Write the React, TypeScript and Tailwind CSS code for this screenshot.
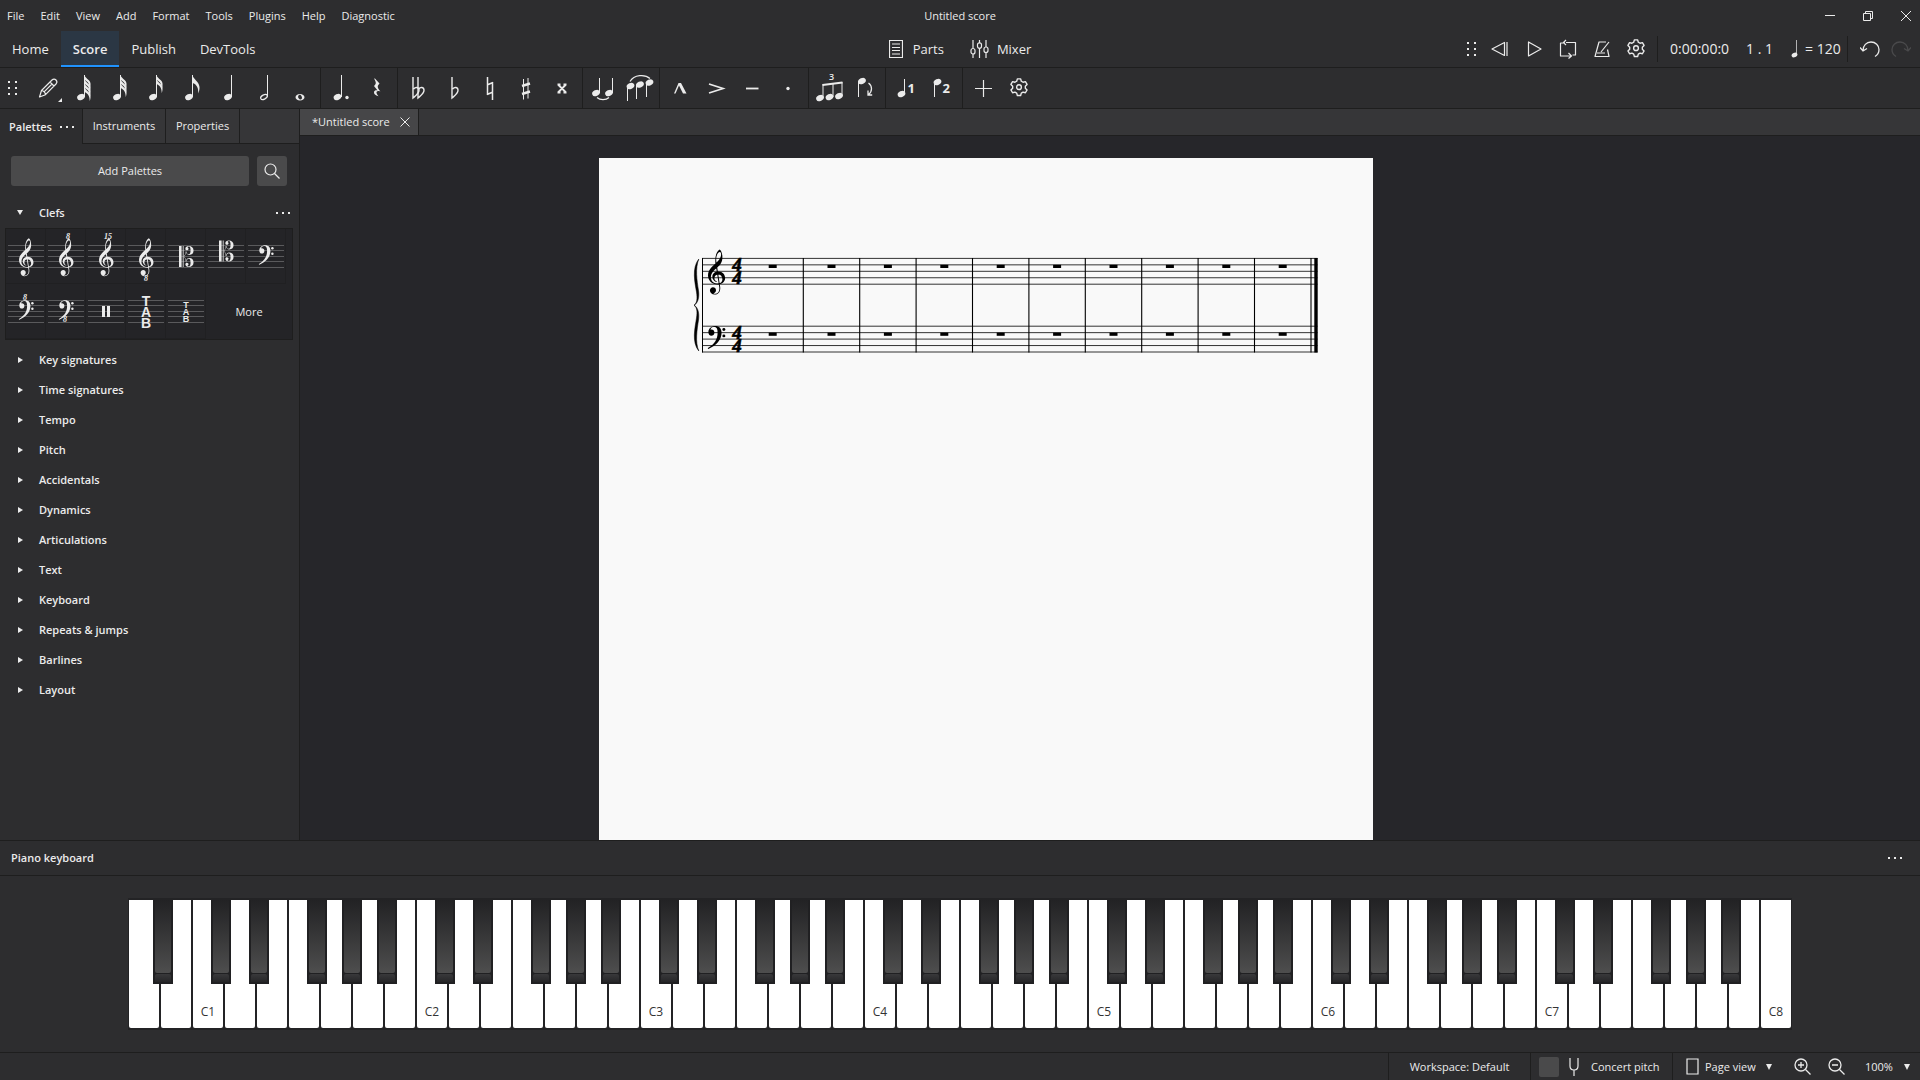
import { useState } from 'react';
import type { ReactNode } from 'react';

const menus = ['File', 'Edit', 'View', 'Add', 'Format', 'Tools', 'Plugins', 'Help', 'Diagnostic'];
const pages = ['Home', 'Score', 'Publish', 'DevTools'];
const palettes = [
  'Key signatures', 'Time signatures', 'Tempo', 'Pitch', 'Accidentals', 'Dynamics',
  'Articulations', 'Text', 'Keyboard', 'Repeats & jumps', 'Barlines', 'Layout',
];

// Clef outlines, 100 units to a staff space, origin on the clef's own line
const G_CLEF =
  'M150-98C225-105 268-50 268 5C268 65 215 105 150 105C65 105 0 45 0-35C0-130 80-190 145-250C190-290 205-330 205-365C205-390 195-400 185-400C160-400 128-350 128-290C128-270 130-255 132-240L190 140C200 210 165 263 105 263C60 263 30 235 30 200C30 170 52 150 78 150C105 150 125 170 125 197C125 225 105 240 85 242C92 250 100 252 108 252C155 252 185 210 176 145L118-210C105-300 120-400 180-439C205-430 225-375 225-320C225-240 190-200 150-165C90-115 45-75 45-5C45 55 95 92 155 92C200 92 225 65 225 25C225-20 195-52 155-50C118-48 100-20 100 8C100 35 118 52 138 60C140 66 136 68 130 66C95 55 68 25 68-15C68-60 100-95 150-98Z';
const F_CLEF =
  'M6-10C6-65 55-105 115-105C175-105 212-65 212 0C212 110 130 200 5 254C-5 250-5 242 5 236C105 175 150 100 150 0C150-60 135-92 95-92C65-92 45-72 38-48C75-55 100-35 100 0C100 30 78 48 52 48C25 48 6 25 6-10Z';

const GClef = ({ x, y, space }: { x: number; y: number; space: number }) => (
  <path d={G_CLEF} fill="currentColor" transform={`translate(${x} ${y}) scale(${space / 100})`} />
);

const FClef = ({ x, y, space }: { x: number; y: number; space: number }) => (
  <g fill="currentColor" transform={`translate(${x} ${y}) scale(${space / 100})`}>
    <path d={F_CLEF} />
    <circle cx="248" cy="-50" r="23" />
    <circle cx="248" cy="50" r="23" />
  </g>
);

const CClef = ({ x, y, space }: { x: number; y: number; space: number }) => {
  const half = (
    <path d="M95 0C125-25 132-48 134-85C142-50 165-30 195-30C255-30 280-65 280-115C280-170 240-202 190-202C150-202 122-180 122-150C122-130 136-118 152-118C172-118 184-132 184-148C184-160 176-170 164-175C172-188 182-190 190-190C215-190 222-160 222-115C222-70 212-42 188-42C165-42 150-60 142-98L128-98C126-60 118-30 95-12Z" />
  );
  return (
    <g fill="currentColor" transform={`translate(${x} ${y}) scale(${space / 100})`}>
      <path d="M0-200h50v400h-50zM72-200h16v400h-16z" />
      {half}
      <g transform="scale(1 -1)">{half}</g>
    </g>
  );
};

const Head = ({ x, y }: { x: number; y: number }) => (
  <ellipse cx={x} cy={y} rx="4" ry="2.9" fill="currentColor" transform={`rotate(-25 ${x} ${y})`} />
);

const Stem = ({ x, from, to }: { x: number; from: number; to: number }) => (
  <path d={`M${x} ${from}V${to}`} stroke="currentColor" strokeWidth="1" fill="none" />
);

const Flags = ({ count }: { count: number }) => (
  <>
    {Array.from({ length: count }, (_, i) => (
      <path
        key={i}
        d={`M18.5 ${7 + i * 4}c.6 3 4.5 4.4 5.6 7c.8 2 .6 4.5-.4 7c.2-5-2.2-8-5.2-9z`}
        fill="currentColor"
      />
    ))}
  </>
);

const Flat = ({ x }: { x: number }) => (
  <path
    d={`M${x} 9V30C${x + 3} 27.5 ${x + 6} 25.5 ${x + 6} 22.3C${x + 6} 19 ${x + 2.6} 18.6 ${x + 0.6} 21`}
    fill="none"
    stroke="currentColor"
    strokeWidth="1.4"
  />
);

const cogPath =
  'M10.2 2h3.6l.7 2.6 1.9 1.1 2.6-.7 1.8 3.1-1.9 1.9v2.2l1.9 1.9-1.8 3.1-2.6-.7-1.9 1.1-.7 2.6h-3.6l-.7-2.6-1.9-1.1-2.6.7-1.8-3.1 1.9-1.9V10L3.200 8.100 5 5l2.600.700 1.900-1.100z';

const Cog = ({ className }: { className: string }) => (
  <svg viewBox="0 0 24 24" className={className} fill="none" stroke="currentColor" strokeWidth="1.5" strokeLinejoin="round">
    <path d={cogPath} />
    <circle cx="12" cy="11.1" r="2.6" />
  </svg>
);

const Grip = () => (
  <svg width="10" height="16" fill="currentColor">
    {[1, 7, 13].map((y) => (
      <path key={y} d={`M0 ${y}h2v2h-2zM7 ${y}h2v2h-2z`} />
    ))}
  </svg>
);

const Dots = () => (
  <svg width="16" height="4" fill="currentColor">
    <path d="M0 1h2v2h-2zM6 1h2v2h-2zM12 1h2v2h-2z" />
  </svg>
);

const noteTools: { label: string; icon: ReactNode }[][] = [
  [
    {
      label: 'Note input',
      icon: (
        <>
          <path
            d="M9.500 29l2-6.500L22 12c1.300-1.300 2.800-1.300 4 0s1.200 2.700 0 4L15.500 26.700zM20 14l4 4M11.500 22.500c2 .3 3.700 2 4 4.200M13.800 24.200l8.200-8.200"
            fill="none"
            stroke="currentColor"
            strokeWidth="1.2"
            strokeLinejoin="round"
          />
          <path d="M32 30v4h-4z" fill="currentColor" />
        </>
      ),
    },
    { label: '64th note', icon: <><Head x={15} y={29} /><Stem x={18.5} from={7} to={29} /><Flags count={4} /></> },
    { label: '32nd note', icon: <><Head x={15} y={29} /><Stem x={18.5} from={7} to={29} /><Flags count={3} /></> },
    { label: '16th note', icon: <><Head x={15} y={29} /><Stem x={18.5} from={7} to={29} /><Flags count={2} /></> },
    {
      label: 'Eighth note',
      icon: (
        <>
          <Head x={15} y={29} />
          <Stem x={18.5} from={7} to={29} />
          <path d="M18.500 7c.5 4 6.500 6.500 7 12c.2 2.500-.5 4.500-1.500 6.500c1-5-1.500-9.500-5.500-10.500z" fill="currentColor" />
        </>
      ),
    },
    { label: 'Quarter note', icon: <><Head x={18} y={29} /><Stem x={21.5} from={7} to={29} /></> },
    {
      label: 'Half note',
      icon: (
        <>
          <ellipse cx="18" cy="29" rx="3.600" ry="2.100" fill="none" stroke="currentColor" strokeWidth="1.200" transform="rotate(-28 18 29)" />
          <Stem x={21.5} from={7} to={28} />
        </>
      ),
    },
    {
      label: 'Whole note',
      icon: (
        <path
          fillRule="evenodd"
          fill="currentColor"
          d="M18 26c2.500 0 4.500 1.300 4.500 3.200S20.500 32.500 18 32.500s-4.500-1.400-4.500-3.300S15.500 26 18 26zm-.8.900c-1.400.4-1.300 2.200-.6 3.400.7 1 1.600 1.400 2.400 1.100 1.300-.5 1.200-2.200.4-3.400-.5-.8-1.400-1.300-2.200-1.100z"
        />
      ),
    },
  ],
  [
    {
      label: 'Augmentation dot',
      icon: <><Head x={14.5} y={29} /><Stem x={18.5} from={7} to={29} /><circle cx="24" cy="29.500" r="1.700" fill="currentColor" /></>,
    },
    {
      label: 'Rest',
      icon: (
        <path
          fill="currentColor"
          d="M15.500 10l5 5.500c-2.500 2.500-2.300 4 .5 7.500l.3.500c-3-1.200-4.200 0-3.700 1.800.3 1.200 1 2 1.900 3-3-1-5-2.500-4.500-4.500.4-1.500 2-2 3.600-1.400l-3.600-4.400c2.300-2 2.300-3.500.5-6.500z"
        />
      ),
    },
  ],
  [
    { label: 'Double flat', icon: <><Flat x={13} /><Flat x={18} /></> },
    { label: 'Flat', icon: <Flat x={16} /> },
    {
      label: 'Natural',
      icon: <path d="M15.500 9V27M20.500 14V32M15 17l6-2.500M15 26.500l6-2.500" fill="none" stroke="currentColor" strokeWidth="1.500" />,
    },
    {
      label: 'Sharp',
      icon: (
        <>
          <path d="M15.500 11V31.500M20 10V30.500" stroke="currentColor" strokeWidth="1" />
          <path d="M14 18l8-2.500M14 26l8-2.500" stroke="currentColor" strokeWidth="2.500" />
        </>
      ),
    },
    {
      label: 'Double sharp',
      icon: <path d="M14 16.500l8 8M22 16.500l-8 8M13.500 16.500h3M13.500 24.500h3M19.500 16.500h3M19.500 24.500h3" stroke="currentColor" strokeWidth="1.800" />,
    },
  ],
  [
    {
      label: 'Tie',
      icon: (
        <>
          <Head x={11} y={25} /><Stem x={14.5} from={10} to={25} />
          <Head x={24} y={25} /><Stem x={27.5} from={10} to={25} />
          <path d="M12 29.500c3 2.800 9 2.800 12 0" fill="none" stroke="currentColor" strokeWidth="1.200" />
        </>
      ),
    },
    {
      label: 'Slur',
      icon: (
        <>
          <Head x={9.5} y={18} /><Stem x={6.5} from={18} to={33} />
          <Head x={19} y={16.5} /><Stem x={15.5} from={16.5} to={31} />
          <Head x={28.5} y={14.5} /><Stem x={25.5} from={14.5} to={29} />
          <path d="M9 13.500c4-7 15-7.500 20-3" fill="none" stroke="currentColor" strokeWidth="1.200" />
        </>
      ),
    },
  ],
  [
    { label: 'Marcato', icon: <path d="M12 25.500l4.500-10.500h2.500l5.500 10.500h-3.500l-4-8-3.500 8z" fill="currentColor" /> },
    { label: 'Accent', icon: <path d="M11 16l14 4.500-14 4.500" fill="none" stroke="currentColor" strokeWidth="1.700" /> },
    { label: 'Tenuto', icon: <path d="M12 20.500h12.500" stroke="currentColor" strokeWidth="1.800" /> },
    { label: 'Staccato', icon: <circle cx="18" cy="20.500" r="1.700" fill="currentColor" /> },
  ],
  [
    {
      label: 'Tuplet',
      icon: (
        <>
          <Head x={9} y={30} /><Stem x={12} from={16} to={30} />
          <Head x={18.5} y={29} /><Stem x={22} from={15} to={29} />
          <Head x={28} y={28} /><Stem x={31} from={14} to={28} />
          <path d="M11.500 17l20-2.500" stroke="currentColor" strokeWidth="2.200" />
          <text x="20.500" y="12" textAnchor="middle" fill="currentColor" className="text-[9px] font-semibold">3</text>
        </>
      ),
    },
    {
      label: 'Flip direction',
      icon: (
        <>
          <Head x={15} y={13} /><Stem x={11.5} from={13} to={29} />
          <path d="M21.500 15c4 3 4 8.500 0 11.500M21 22.500v4.500h4.200" fill="none" stroke="currentColor" strokeWidth="1.300" />
        </>
      ),
    },
  ],
  [
    {
      label: 'Voice 1',
      icon: (
        <>
          <Head x={13.5} y={26} /><Stem x={16.5} from={11} to={26} />
          <text x="19.500" y="25" fill="currentColor" className="text-[13px] font-bold">1</text>
        </>
      ),
    },
    {
      label: 'Voice 2',
      icon: (
        <>
          <Head x={13.5} y={14} /><Stem x={10.5} from={14} to={29} />
          <text x="18.500" y="25" fill="currentColor" className="text-[13px] font-bold">2</text>
        </>
      ),
    },
  ],
];

const NoteToolbar = () => (
  <div className="flex h-10 items-center" role="toolbar" aria-label="Note input">
    <div className="flex w-7 pl-2"><Grip /></div>
    {noteTools.map((group, i) => (
      <div key={i} className="flex h-full items-center border-r border-[#1e1e1e] pr-0.5 not-first:pl-0.5">
        {group.map((tool) => (
          <button key={tool.label} aria-label={tool.label} className="h-10 w-9">
            <svg viewBox="0 0 36 40" className="h-10 w-9">{tool.icon}</svg>
          </button>
        ))}
      </div>
    ))}
    <button aria-label="Add" className="flex h-10 w-10 items-center justify-center">
      <svg width="17" height="17"><path d="M8.500 0v17M0 8.500h17" stroke="currentColor" strokeWidth="1.200" /></svg>
    </button>
    <button aria-label="Customise toolbar" className="flex h-10 w-8 items-center justify-center">
      <Cog className="h-[22px] w-[22px]" />
    </button>
  </div>
);

const TitleBar = () => (
  <header className="grid h-[31px] grid-cols-[1fr_auto_1fr] items-center">
    <nav className="flex gap-4 pl-[7px]">
      {menus.map((menu) => (
        <button key={menu}>{menu}</button>
      ))}
    </nav>
    <h1>Untitled score</h1>
    <div className="flex justify-end gap-[26px] pr-2">
      <button aria-label="Minimise"><svg width="12" height="12"><path d="M1 5.500h10" stroke="currentColor" /></svg></button>
      <button aria-label="Restore">
        <svg width="12" height="12" fill="none" stroke="currentColor">
          <path d="M1.500 3.500h7v7h-7zM3.500 3.500v-2h7v7h-2" />
        </svg>
      </button>
      <button aria-label="Close"><svg width="12" height="12"><path d="M1 1l10 10M11 1L1 11" stroke="currentColor" /></svg></button>
    </div>
  </header>
);

const transport = [
  { label: 'Rewind', d: 'M17 3v14M14.500 3.500v13L2 10z' },
  { label: 'Play', d: 'M4.500 3v14L17 10z' },
  { label: 'Loop playback', d: 'M7 4h-4.500v13h10M8 3.500h9.500v12.500h-3M8 1L5.500 3.500l2.500 2.500M10.500 14l3 3-3 2.500' },
  { label: 'Metronome', d: 'M14 3H7L3 17.500h14l-1.500-7M9 13L17 3M5 14h8' },
];

const MainBar = ({ page, onPage }: { page: string; onPage: (p: string) => void }) => (
  <div className="grid h-9 grid-cols-[1fr_auto_1fr] items-center text-[13px]">
    <nav className="flex h-full">
      {pages.map((name) => (
        <button
          key={name}
          onClick={() => onPage(name)}
          className={`border-b-2 px-3 pt-0.5 ${page === name ? 'border-[#2093fe] bg-[#2b3744] font-semibold' : 'border-transparent'}`}
        >
          {name}
        </button>
      ))}
    </nav>
    <div className="flex items-center gap-[26px]">
      <button className="flex items-center gap-2.5">
        <svg width="14" height="18" fill="none" stroke="currentColor">
          <path d="M.5.500h13v17h-13zM3 4h8M3 7.500h8M3 10.500h8M3 14h8" strokeWidth="1.200" />
        </svg>
        Parts
      </button>
      <button className="flex items-center gap-2">
        <svg width="19" height="18" fill="none" stroke="currentColor" strokeWidth="1.200">
          <path d="M3 0v8M3 14v4M9.500 0v3M9.500 8v10M16 0v7M16 12v6" />
          <rect x="1" y="8.500" width="4" height="5.500" rx="2" />
          <rect x="7.500" y="2.800" width="4" height="5.500" rx="2" />
          <rect x="14" y="7" width="4" height="5.500" rx="2" />
        </svg>
        Mixer
      </button>
    </div>
    <div className="flex h-full items-center justify-end pr-1 text-[14px]">
      <div className="mr-1.5"><Grip /></div>
      {transport.map((t) => (
        <button key={t.label} aria-label={t.label} className="flex w-[34px] justify-center">
          <svg width="20" height="20" fill="none" stroke="currentColor" strokeWidth="1.200" strokeLinejoin="round">
            <path d={t.d} />
          </svg>
        </button>
      ))}
      <button aria-label="Playback settings" className="flex w-[34px] justify-center">
        <Cog className="h-[22px] w-[22px]" />
      </button>
      <div className="mr-3 ml-1 h-[26px] w-px bg-[#1e1e1e]" />
      <span className="w-[76px]">0:00:00:0</span>
      <span className="w-[45px]">1 . 1</span>
      <button className="flex w-[56px] items-center gap-1.5">
        <svg width="8" height="18" className="shrink-0">
          <ellipse cx="3.500" cy="15" rx="3" ry="2.200" fill="currentColor" transform="rotate(-25 3.500 15)" />
          <path d="M5.500 0v15" stroke="currentColor" strokeOpacity=".7" />
        </svg>
        <span className="whitespace-nowrap">= 120</span>
      </button>
      <div className="mr-1.5 h-[26px] w-px bg-[#1e1e1e]" />
      <button aria-label="Undo" className="flex w-[31px] justify-center">
        <svg width="20" height="18" fill="none" stroke="currentColor" strokeWidth="1.300">
          <path d="M3 10.500C3 5.500 6.500 2 11 2s8 3.500 8 7.500c0 3-1.500 5.500-4 7M0 7.500l3 3.500 4-2.500" />
        </svg>
      </button>
      <button aria-label="Redo" disabled className="flex w-[31px] justify-center opacity-15">
        <svg width="20" height="18" fill="none" stroke="currentColor" strokeWidth="1.300">
          <path d="M17 10.500C17 5.500 13.500 2 9 2S1 5.500 1 9.500c0 3 1.500 5.500 4 7M20 7.500l-3 3.500-4-2.500" />
        </svg>
      </button>
    </div>
  </div>
);

const Ottava = ({ x = 22, y, children }: { x?: number; y: number; children: ReactNode }) => (
  <text x={x} y={y} textAnchor="middle" fill="currentColor" className="font-['Liberation_Serif'] text-[8px] font-bold italic">
    {children}
  </text>
);

const Tab = ({ size, top, step }: { size: string; top: number; step: number }) => (
  <text fill="currentColor" textAnchor="middle" className={`font-['Liberation_Sans'] font-bold ${size}`}>
    {['T', 'A', 'B'].map((letter, i) => (
      <tspan key={letter} x="20" y={top + i * step}>{letter}</tspan>
    ))}
  </text>
);

// Each cell is 40 x 55 with the five lines starting at y = 16
const clefs: { label: string; icon: ReactNode }[] = [
  { label: 'Treble clef', icon: <GClef x={13} y={33} space={5.4} /> },
  { label: 'Treble clef 8va alta', icon: <><GClef x={13} y={33} space={5.4} /><Ottava y={10}>8</Ottava></> },
  { label: 'Treble clef 15ma alta', icon: <><GClef x={13} y={33} space={5.4} /><Ottava y={10}>15</Ottava></> },
  { label: 'Treble clef 8va bassa', icon: <><GClef x={13} y={33} space={5.4} /><Ottava x={20} y={52}>8</Ottava></> },
  { label: 'Alto clef', icon: <CClef x={13} y={27.5} space={5.2} /> },
  { label: 'Tenor clef', icon: <CClef x={13} y={22} space={5.2} /> },
  { label: 'Bass clef', icon: <FClef x={13} y={22} space={5.4} /> },
  { label: 'Bass clef 8va alta', icon: <><FClef x={13} y={22} space={5.4} /><Ottava x={19} y={16}>8</Ottava></> },
  { label: 'Bass clef 8va bassa', icon: <><FClef x={13} y={22} space={5.4} /><Ottava x={19} y={38}>8</Ottava></> },
  { label: 'Percussion', icon: <path d="M16 22h3v11h-3zM21 22h3v11h-3z" fill="currentColor" /> },
  { label: 'Tablature', icon: <Tab size="text-[14px]" top={22} step={11} /> },
  { label: 'Tablature 4 lines', icon: <Tab size="text-[9px]" top={24} step={7} /> },
];

const Sidebar = () => (
  <aside className="flex w-[300px] shrink-0 flex-col border-r border-[#1e1e1e]">
    <div className="flex h-[35px]" role="tablist">
      <button role="tab" aria-selected="true" className="flex w-[82px] items-center gap-2 pl-[9px] font-semibold">
        Palettes <Dots />
      </button>
      <button role="tab" className="w-[84px] border-x border-b border-[#1e1e1e] bg-[#363638]">Instruments</button>
      <button role="tab" className="w-[74px] border-r border-b border-[#1e1e1e] bg-[#363638]">Properties</button>
      <div className="flex-1 border-b border-[#1e1e1e] bg-[#363638]" />
    </div>
    <div className="flex gap-2 pt-3 pr-3 pl-[11px]">
      <button className="h-[30px] flex-1 rounded-[3px] bg-[#4a4a4b]">Add Palettes</button>
      <button aria-label="Search" className="flex h-[30px] w-[30px] items-center justify-center rounded-[3px] bg-[#4a4a4b]">
        <svg width="16" height="16" fill="none" stroke="currentColor" strokeWidth="1.200">
          <circle cx="6.500" cy="6.500" r="5.500" />
          <path d="M10.500 10.500l5 5" />
        </svg>
      </button>
    </div>
    <div className="mt-3 flex h-[30px] items-center pr-[7px]">
      <button className="flex flex-1 items-center pl-[17px] font-semibold">
        <svg width="22" height="6" fill="currentColor"><path d="M0 0h6L3 5z" /></svg>
        Clefs
      </button>
      <button aria-label="Clefs options"><Dots /></button>
    </div>
    <div className="mr-1.5 ml-[5px] flex flex-wrap border border-[#1e1e1e] bg-[#242427]">
      {clefs.map((clef) => (
        <button key={clef.label} aria-label={clef.label} className="h-[55px] w-10 border-r border-b border-[#202022]">
          <svg viewBox="0 0 40 55" className="h-[55px] w-10">
            <g className="text-[#5a5a5c]" stroke="currentColor">
              {[16.5, 21.5, 27.5, 32.5, 38.5].map((y) => (
                <path key={y} d={`M2 ${y}h36`} />
              ))}
            </g>
            {clef.icon}
          </svg>
        </button>
      ))}
      <button className="h-[55px] flex-1">More</button>
    </div>
    <div className="mt-[5px]">
      {palettes.map((name) => (
        <button key={name} className="flex h-[30px] w-full items-center pl-[17px] font-semibold">
          <svg width="22" height="6" fill="currentColor"><path d="M1 0v6l5-3z" /></svg>
          {name}
        </button>
      ))}
    </div>
  </aside>
);

const BARS = [204.3, 260.7, 317.1, 373.5, 429.9, 486.3, 542.7, 599.1, 655.5];
const RESTS = [173.7, ...BARS.map((x) => x + 28.2)];

const Staff = ({ top }: { top: number }) => (
  <g transform={`translate(0 ${top})`}>
    {[0, 6.45, 12.9, 19.35, 25.8].map((y) => (
      <path key={y} d={`M103 ${y}H718.500`} stroke="#000" strokeWidth=".8" />
    ))}
    {RESTS.map((x) => (
      <rect key={x} x={x - 4} y="6.400" width="8" height="3.200" />
    ))}
    <text textAnchor="middle" className="font-['Liberation_Serif'] text-[19px] font-bold italic" stroke="#000" strokeWidth=".6">
      <tspan x="138" y="12.700">4</tspan>
      <tspan x="138" y="25.700">4</tspan>
    </text>
  </g>
);

const ScorePage = () => (
  <svg viewBox="0 0 774 1095" className="w-[774px] shrink-0 bg-[#f9f9f9] text-black">
    <Staff top={100.4} />
    <Staff top={168.2} />
    <GClef x={109} y={119.700} space={6.4} />
    <FClef x={109} y={174.700} space={6.4} />
    <path d="M99.800 101C92.500 110 96 125 97.500 134C98.500 141 98 145 95 147.200C98 149.500 98.500 153.500 97.500 160C96 170 92.500 184 99.800 193C96 184 98 172 99.500 162C100.500 155 99 150 95.500 147.200C99 144.500 100.500 139.500 99.500 132.500C98 122.500 96 110.500 99.800 101Z" stroke="#000" strokeWidth=".5" />
    <path d="M103.500 100V194.500" stroke="#000" />
    {BARS.map((x) => (
      <path key={x} d={`M${x} 100V194.500`} stroke="#000" strokeWidth="1.100" />
    ))}
    <path d="M712 100V194.500" stroke="#000" strokeWidth="1.100" />
    <path d="M717 100V194.500" stroke="#000" strokeWidth="3.400" />
  </svg>
);

const ScoreView = () => (
  <main className="flex min-w-0 flex-1 flex-col">
    <div className="flex h-[27px] shrink-0 border-b border-[#1e1e1e] bg-[#363638]">
      <div className="flex items-center gap-2.5 border-r border-[#1e1e1e] bg-[#464648] pr-2 pl-3">
        *Untitled score
        <button aria-label="Close score">
          <svg width="10" height="10"><path d="M.5.500l9 9M9.500.500l-9 9" stroke="currentColor" /></svg>
        </button>
      </div>
    </div>
    <div className="flex min-h-0 flex-1 items-start overflow-hidden bg-[#26262a] pt-[22px] pl-[299px]">
      <ScorePage />
    </div>
  </main>
);

// The black key that follows a white key, pushed off the gap the way a real octave is
const blackOffset: Record<string, string> = {
  C: 'left-[19px]',
  D: 'left-[25px]',
  F: 'left-[19px]',
  G: 'left-[22px]',
  A: 'left-[25px]',
};

const whiteKeys = Array.from({ length: 52 }, (_, i) => ({
  name: 'ABCDEFG'[i % 7],
  octave: Math.floor((i + 5) / 7),
}));

const PianoKeyboard = () => (
  <section>
    <div className="flex h-9 items-center justify-between border-y border-[#1e1e1e] pr-4 pl-[11px]">
      <h2 className="font-semibold">Piano keyboard</h2>
      <button aria-label="Piano keyboard options"><Dots /></button>
    </div>
    <div className="flex h-[176px] items-start justify-center pt-[22px]">
      <div className="flex border-y-2 border-[#232325] bg-[#232325]">
        {whiteKeys.map((key, i) => (
          <div key={i} className="relative h-32 w-8 px-px">
            <button
              aria-label={`${key.name}${key.octave}`}
              className="flex h-full w-full items-end justify-center rounded-b-xs bg-white pb-2 text-[12px] text-[#333]"
            >
              {key.name === 'C' ? `C${key.octave}` : ''}
            </button>
            {blackOffset[key.name] && i < 51 && (
              <button
                aria-label={`${key.name}♯${key.octave}`}
                className={`absolute top-0 z-10 flex h-[84px] w-5 flex-col gap-px bg-[#202022] px-0.5 pb-0.5 ${blackOffset[key.name]}`}
              >
                <span className="w-full flex-1 rounded-b-xs bg-linear-to-b from-[#222224] to-[#4e4e4e]" />
                <span className="h-2 w-full rounded-t-xs bg-linear-to-b from-[#39393b] to-[#262628]" />
              </button>
            )}
          </div>
        ))}
      </div>
    </div>
  </section>
);

const Arrow = () => (
  <svg width="6" height="6" fill="currentColor" className="pointer-events-none"><path d="M0 0h6L3 6z" /></svg>
);

const Magnifier = ({ d }: { d: string }) => (
  <svg width="17" height="17" fill="none" stroke="currentColor" strokeWidth="1.300">
    <circle cx="7" cy="7" r="6" />
    <path d={`M11.500 11.500l5 5${d}`} />
  </svg>
);

const StatusBar = () => (
  <footer className="flex h-7 items-center justify-end border-t border-[#1e1e1e]">
    <button className="h-full w-[143px] border-x border-[#1e1e1e]">Workspace: Default</button>
    <label className="flex h-full w-[142px] items-center border-r border-[#1e1e1e] pl-2">
      <input type="checkbox" className="h-5 w-5 appearance-none rounded-xs bg-[#4a4a4b] checked:bg-[#2093fe]" />
      <svg width="10" height="18" className="mr-3 ml-2.5" fill="none" stroke="currentColor" strokeWidth="1.200">
        <path d="M1 0v8c0 2.500 1.500 4 4 4s4-1.500 4-4V0M5 12v6" />
      </svg>
      Concert pitch
    </label>
    <div className="flex w-[104px] items-center pl-[13px]">
      <svg width="13" height="17" fill="none" stroke="currentColor" className="mr-1.5">
        <path d="M1 1h11v15h-11z" strokeWidth="1.200" />
      </svg>
      <select aria-label="View mode" className="w-[61px] appearance-none bg-transparent">
        <option>Page view</option>
      </select>
      <Arrow />
    </div>
    <button aria-label="Zoom in" className="flex w-[34px] justify-end"><Magnifier d="M4 7h6M7 4v6" /></button>
    <button aria-label="Zoom out" className="flex w-[34px] justify-end"><Magnifier d="M4 7h6" /></button>
    <div className="flex items-center pr-2.5 pl-5">
      <select aria-label="Zoom" className="w-[39px] appearance-none bg-transparent">
        <option>100%</option>
      </select>
      <Arrow />
    </div>
  </footer>
);

const App = () => {
  const [page, setPage] = useState('Score');

  return (
    <div className="flex h-screen flex-col overflow-hidden bg-[#2d2d2f] font-['Open_Sans',sans-serif] text-[11px] leading-4 text-[#ebebeb]">
      <TitleBar />
      <MainBar page={page} onPage={setPage} />
      <div className="border-y border-[#1e1e1e]">
        <NoteToolbar />
      </div>
      <div className="flex min-h-0 flex-1">
        <Sidebar />
        <ScoreView />
      </div>
      <PianoKeyboard />
      <StatusBar />
    </div>
  );
};

export default App;
